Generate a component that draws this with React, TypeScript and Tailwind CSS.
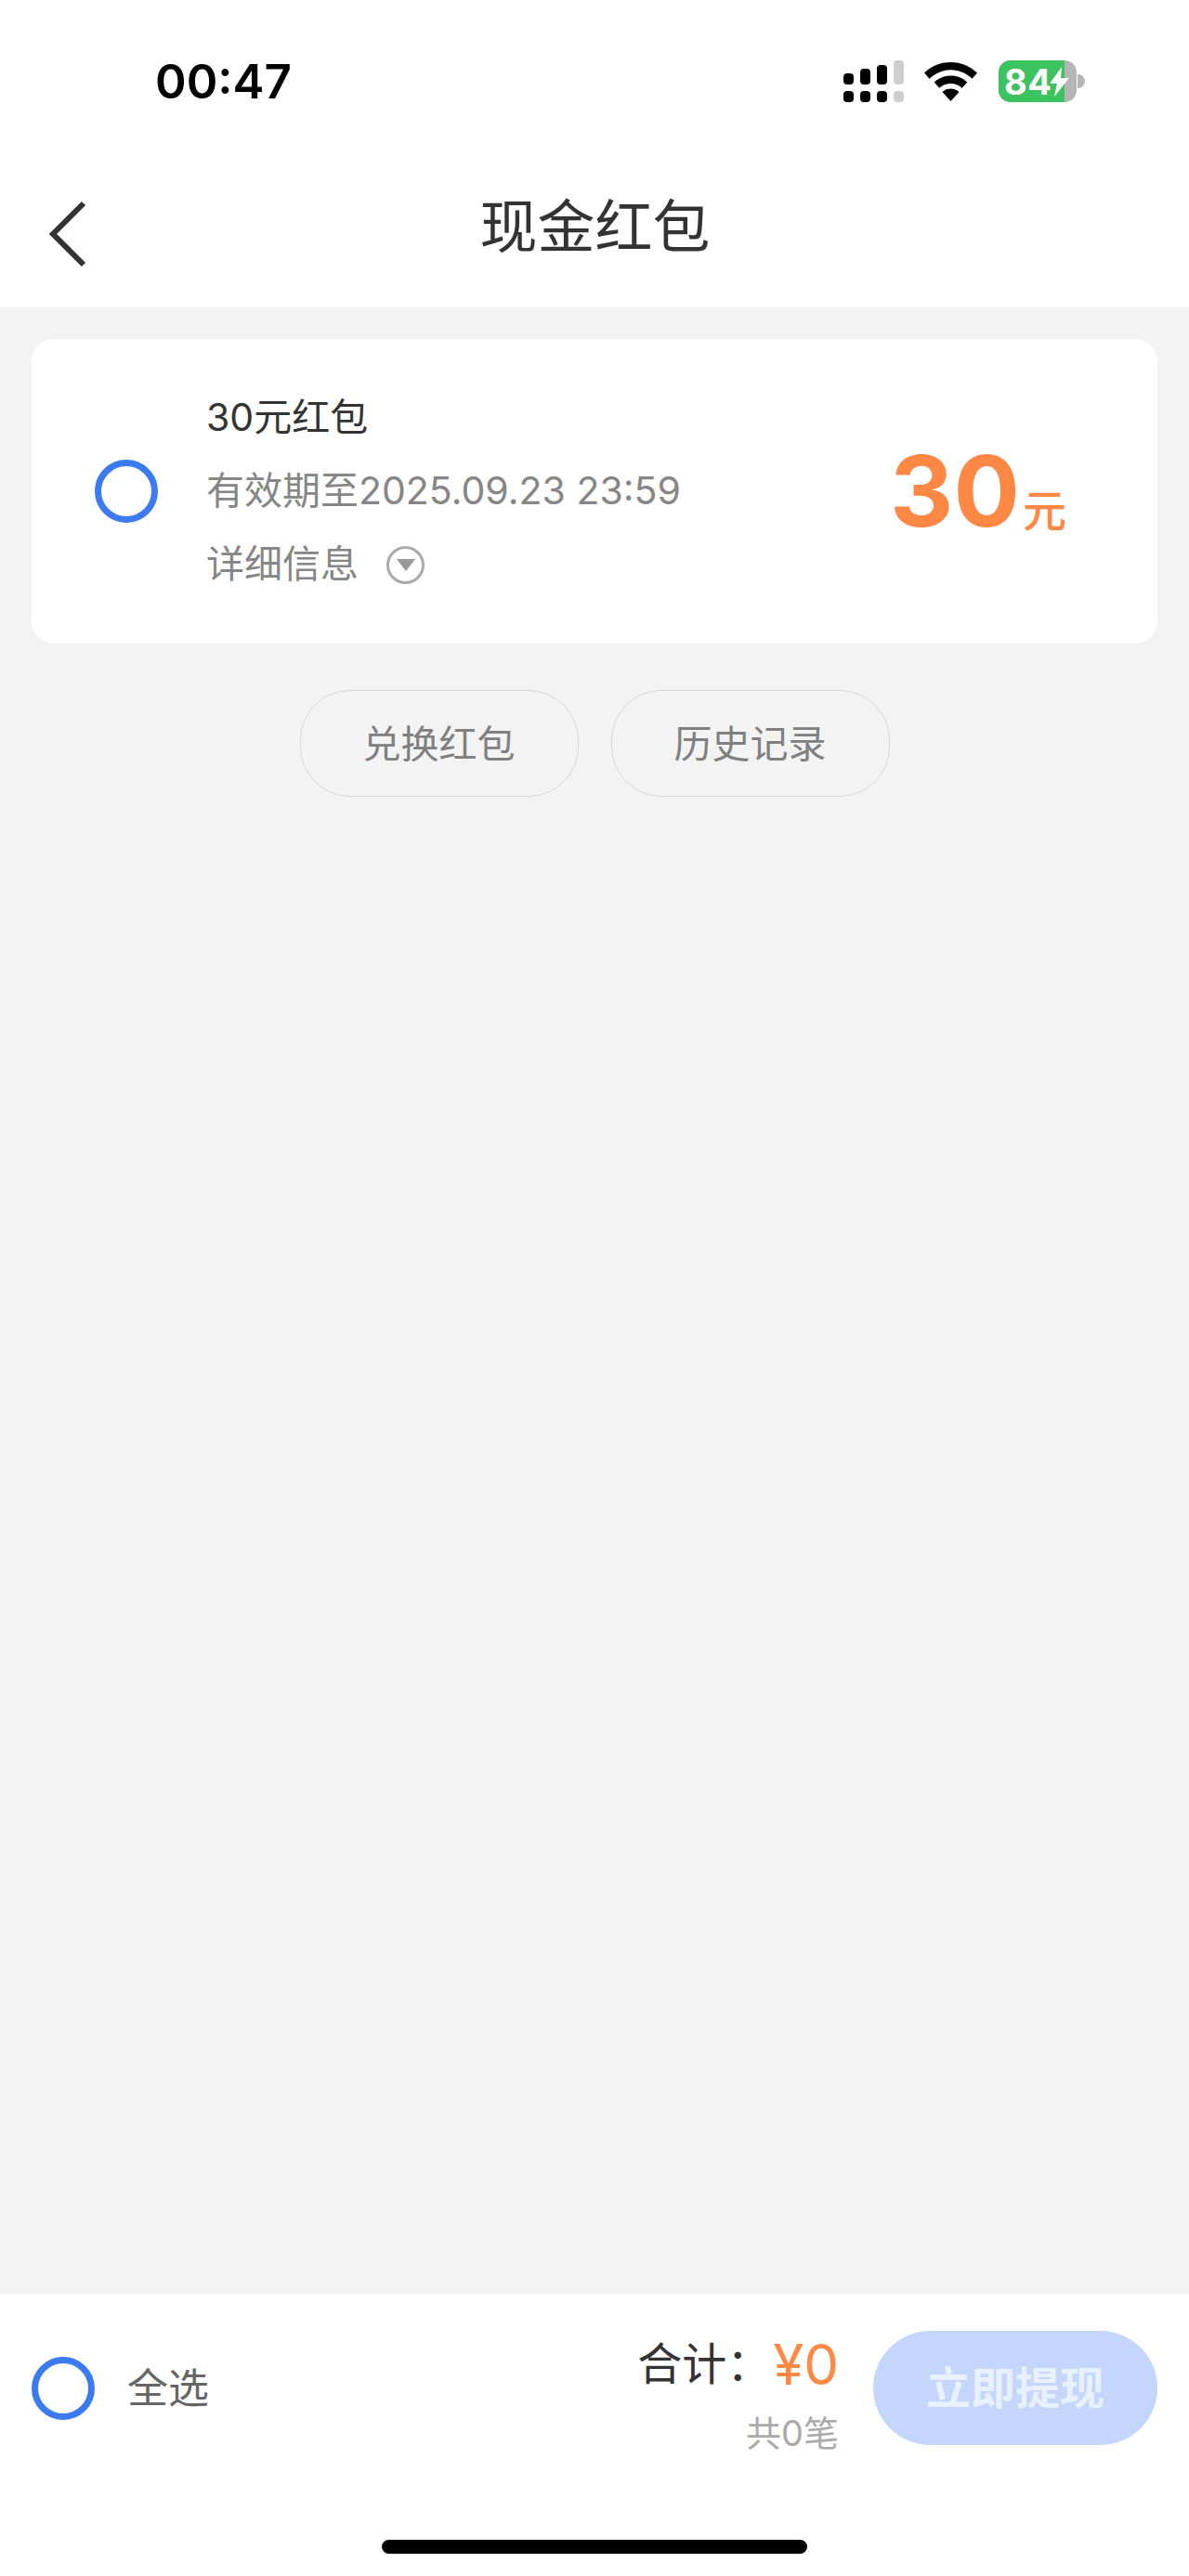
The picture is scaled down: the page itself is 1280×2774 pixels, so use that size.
const Ring = () => (
  <div className="w-[68px] h-[68px] shrink-0 rounded-full border-[7px] border-[#3b7af0]" />
);

const StatusIcons = () => (
  <div className="flex items-center">
    <svg width="65" height="45" viewBox="0 0 65 45" className="mr-[22px]">
      <g fill="#000">
        <rect x="0" y="14" width="11" height="12" rx="4" />
        <rect x="18" y="9" width="11" height="17" rx="4" />
        <rect x="36" y="5" width="11" height="21" rx="4" />
        <rect x="0" y="33" width="11" height="12" rx="4" />
        <rect x="18" y="33" width="11" height="12" rx="4" />
        <rect x="36" y="33" width="11" height="12" rx="4" />
      </g>
      <g fill="#cfcfcf">
        <rect x="54" y="0" width="11" height="26" rx="4" />
        <rect x="54" y="33" width="11" height="12" rx="4" />
      </g>
    </svg>
    <svg width="57" height="42" viewBox="0 0 57 42" className="mr-[23px]">
      <path
        d="M28.5 0C17.5 0 7.8 4.2 0 11.5l5.5 6.2C12 11.6 19.8 8.2 28.5 8.2s16.5 3.4 23 9.5l5.5-6.2C49.2 4.2 39.5 0 28.5 0Z"
        fill="#000"
      />
      <path
        d="M28.5 14.5c-6.8 0-13 2.6-17.8 7l5.6 6.3c3.2-3 7.5-4.9 12.2-4.9s9 1.9 12.2 4.9l5.6-6.3c-4.8-4.4-11-7-17.8-7Z"
        fill="#000"
      />
      <path d="M28.5 42 19.5 32c2.4-2.1 5.6-3.4 9-3.4s6.6 1.3 9 3.4L28.5 42Z" fill="#000" />
    </svg>
    <div className="flex items-center">
      <div className="relative flex w-[84px] h-[45px] rounded-[13px] overflow-hidden bg-[#b5b5b5]">
        <div className="w-[71px] h-full bg-[#3cc35f] pl-[6px] flex items-center">
          <span className="font-['Inter','Liberation_Sans',sans-serif] font-bold text-[38px] leading-none tracking-[0.5px] text-white">
            84
          </span>
        </div>
        <svg
          width="21"
          height="32"
          viewBox="0 0 21 32"
          className="absolute left-[55px] top-[7px]"
        >
          <path d="M13 0 0 18h8L5 32 21 12h-9l1-12Z" fill="#fff" />
        </svg>
      </div>
      <div className="w-[8px] h-[15px] ml-[1px] rounded-r-full bg-[#b5b5b5]" />
    </div>
  </div>
);

const PillButton = ({ label }: { label: string }) => (
  <button className="w-[300px] h-[115px] rounded-[54px] border-[1.5px] border-[#d6d6d6] pt-[2px] text-[41px] text-[#808080]">
    {label}
  </button>
);

export default function App() {
  return (
    <div className="w-[1280px] h-[2774px] flex flex-col bg-[#f3f3f3] font-['Inter','Noto_Sans_CJK_SC',sans-serif]">
      <header className="h-[331px] shrink-0 bg-white">
        <div className="h-[45px] mt-[65px] pl-[167px] pr-[112px] flex items-center justify-between">
          <span className="font-semibold text-[51px] leading-none text-black">00:47</span>
          <StatusIcons />
        </div>
        <div className="h-[110px] mt-[87px] pl-[53px] grid grid-cols-3 items-center">
          <svg width="40" height="72" viewBox="0 0 40 72">
            <path d="M37 3 4 36l33 33" fill="none" stroke="#333" strokeWidth="6" />
          </svg>
          <h1 className="justify-self-center mr-[52px] pb-[14px] whitespace-nowrap text-[62px] font-normal leading-none text-[#333]">
            现金红包
          </h1>
        </div>
      </header>

      <main className="flex-1 px-[34px] pt-[34px]">
        <div className="h-[328px] rounded-[24px] bg-white pl-[68px] pr-[98px] flex items-center">
          <Ring />
          <div className="ml-[52px] flex flex-col">
            <div className="h-[79px] flex items-center text-[41px] text-[#333]">30元红包</div>
            <div className="h-[79px] flex items-center text-[41px] text-[#868686]">
              有效期至2025.09.23 23:59
            </div>
            <div className="h-[79px] flex items-center text-[41px] text-[#868686]">
              详细信息
              <div className="ml-[30px] w-[41px] h-[41px] rounded-full border-[3px] border-[#aaaaaa] flex items-center justify-center">
                <svg width="20" height="13" viewBox="0 0 20 13">
                  <path d="M0 0h20L10 13Z" fill="#999" />
                </svg>
              </div>
            </div>
          </div>
          <div className="ml-auto flex items-end text-[#ff8844]">
            <span className="font-bold text-[106px] leading-none">30</span>
            <span className="ml-[3px] mb-[9px] text-[47px] font-medium leading-none">元</span>
          </div>
        </div>

        <div className="mt-[50px] flex justify-center gap-[35px]">
          <PillButton label="兑换红包" />
          <PillButton label="历史记录" />
        </div>
      </main>

      <footer className="h-[304px] shrink-0 bg-white pt-[40px]">
        <div className="h-[123px] px-[34px] flex items-center">
          <Ring />
          <span className="ml-[35px] text-[44px] text-[#666]">全选</span>
          <div className="ml-auto mt-[12px] flex flex-col items-end">
            <div className="flex items-center">
              <span className="mr-[2px] text-[48px] leading-none text-[#333]">合计：</span>
              <span className="text-[60px] leading-none text-[#ff8844]">¥0</span>
            </div>
            <span className="mt-[25px] text-[38px] leading-none text-[#aaaaaa]">共0笔</span>
          </div>
          <button className="ml-[37px] w-[306px] h-[123px] rounded-full bg-[#c4d6fb] text-[48px] font-bold text-[#e9f0fe]">
            立即提现
          </button>
        </div>
        <div className="mt-[102px] mx-auto w-[458px] h-[15px] rounded-full bg-black" />
      </footer>
    </div>
  );
}
